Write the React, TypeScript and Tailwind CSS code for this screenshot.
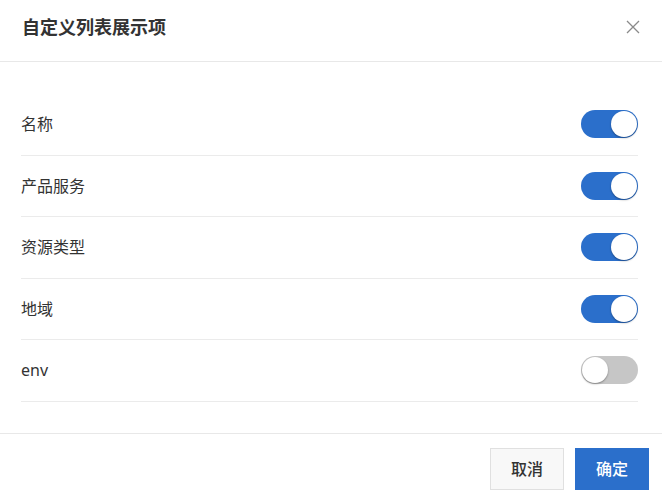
import React, { useState } from "react";

const items = [
  { label: "名称", on: true },
  { label: "产品服务", on: true },
  { label: "资源类型", on: true },
  { label: "地域", on: true },
  { label: "env", on: false },
];

function Toggle({ on, onClick }: { on: boolean; onClick: () => void }) {
  return (
    <button
      onClick={onClick}
      className={`relative flex h-[28px] w-[57px] items-center rounded-full p-[1px] ${
        on ? "justify-end bg-[#2b6fcb]" : "justify-start bg-[#c6c6c6]"
      }`}
    >
      <span className="block h-[26px] w-[26px] rounded-full bg-white shadow-[0_1px_2px_rgba(0,0,0,0.35)]" />
    </button>
  );
}

export default function App() {
  const [state, setState] = useState(items.map((i) => i.on));
  return (
    <div
      className="flex h-[500px] w-[662px] flex-col bg-white text-[#333]"
      style={{ fontFamily: '"Noto Sans", "Noto Sans CJK SC", sans-serif' }}
    >
      <div className="flex h-[62px] shrink-0 items-start justify-between border-b-[1.5px] border-[#e8e8e8] pl-[22px] pr-[22px] pt-[15px]">
        <div className="text-[18px] font-semibold leading-[24px] text-[#333]">自定义列表展示项</div>
        <svg width="14" height="14" viewBox="0 0 14 14" className="mt-[5px]">
          <path d="M1 1 L13 13 M13 1 L1 13" stroke="#8a8a8a" strokeWidth="1.3" fill="none" />
        </svg>
      </div>
      <div className="flex flex-col pl-[21px] pr-[24px] pt-[32px]">
        {items.map((it, i) => (
          <div
            key={it.label}
            className="flex h-[61.5px] items-center justify-between border-b-[1.5px] border-[#ebebeb]"
          >
            <span className="text-[16px] leading-[20px] text-[#333]">{it.label}</span>
            <Toggle
              on={state[i]}
              onClick={() => setState((s) => s.map((v, j) => (j === i ? !v : v)))}
            />
          </div>
        ))}
      </div>
      <div className="mt-[31px] flex justify-end gap-[11px] border-t-[1.5px] border-[#e8e8e8] pr-[13px] pt-[14px]">
        <button className="h-[42px] w-[74px] border border-[#e0e0e0] bg-[#f8f8f8] text-[16px] font-medium text-[#333]">
          取消
        </button>
        <button className="h-[42px] w-[74px] bg-[#2b6fcb] text-[16px] font-medium text-white">确定</button>
      </div>
    </div>
  );
}
